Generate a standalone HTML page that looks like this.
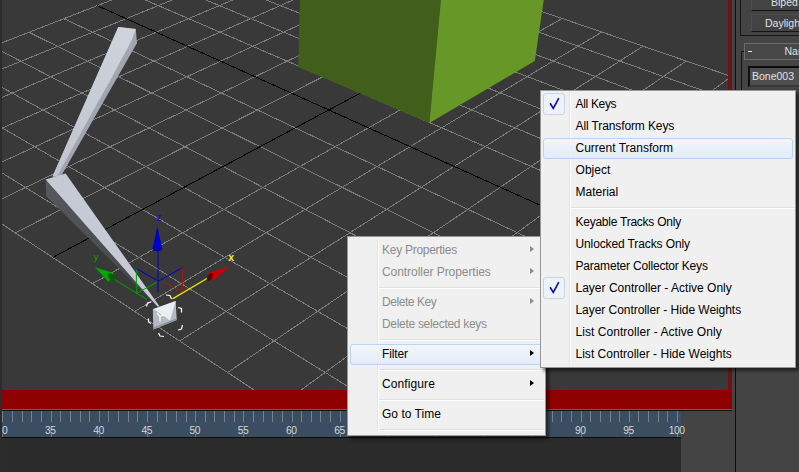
<!DOCTYPE html>
<html><head><meta charset="utf-8"><title>Filter menu</title>
<style>
html,body{margin:0;padding:0}
body{width:799px;height:472px;overflow:hidden;position:relative;background:#444444;font-family:"Liberation Sans",sans-serif}
.abs{position:absolute}
.vp{position:absolute;left:2px;top:0;background:#393939;overflow:hidden}
.menu{position:absolute;background:#f0f0f0;border:1px solid #979797;box-sizing:border-box;font-size:12px;color:#000;box-shadow:3px 3px 3px rgba(0,0,0,.5)}
.menu .gut{position:absolute;top:2px;bottom:2px;width:1px;background:#e2e3e3;border-right:1px solid #fff}
.mi{position:absolute;left:0;right:0;height:22px;line-height:22px;white-space:nowrap}
.mi span{position:absolute;top:0}
.dis{color:#8c8c8c}
.sep{position:absolute;height:1px;background:#e0e0e0;border-bottom:1px solid #fff}
.hl{position:absolute;box-sizing:border-box;border:1px solid #b4d2f6;border-radius:3px;background:linear-gradient(#f3f7fc,#e1ecfa);opacity:.9}
.arr{position:absolute;width:0;height:0;border-left:4px solid #000;border-top:3.5px solid transparent;border-bottom:3.5px solid transparent}
.chk{position:absolute;box-sizing:border-box;width:22px;height:22px;border:1px solid #c2d5ec;border-radius:3px;background:#eef3fa}
.ptxt{position:absolute;color:#e1e1e1;font-size:10.5px;white-space:nowrap}
.tl{position:absolute;color:#d4d8dc;font-size:10.3px;letter-spacing:-0.45px;white-space:nowrap;transform:translateX(-50%)}
</style></head><body>
<div class="abs" style="left:0;top:0;width:2px;height:472px;background:#2c2c2c"></div>
<svg class="vp" width="727" height="390" viewBox="2 0 727 390">
<defs><linearGradient id="b1g" gradientUnits="userSpaceOnUse" x1="127" y1="28" x2="55" y2="176"><stop offset="0" stop-color="#cfd3db"/><stop offset="1" stop-color="#c0c4ce"/></linearGradient><linearGradient id="b2d" gradientUnits="userSpaceOnUse" x1="46" y1="185" x2="150" y2="300"><stop offset="0" stop-color="#55585e"/><stop offset="1" stop-color="#444649"/></linearGradient></defs>
<g stroke-width="1" fill="none" shape-rendering="crispEdges">
<line x1="-171.20" y1="110.18" x2="297.48" y2="-72.27" stroke="#7c7c7c"/>
<line x1="-171.20" y1="110.18" x2="392.61" y2="481.06" stroke="#7c7c7c"/>
<line x1="-144.00" y1="128.08" x2="326.29" y2="-62.40" stroke="#7c7c7c"/>
<line x1="-127.35" y1="93.11" x2="438.20" y2="442.22" stroke="#7c7c7c"/>
<line x1="-115.41" y1="146.88" x2="356.19" y2="-52.15" stroke="#7c7c7c"/>
<line x1="-85.54" y1="76.84" x2="480.65" y2="406.05" stroke="#7c7c7c"/>
<line x1="-85.32" y1="166.68" x2="387.23" y2="-41.51" stroke="#7c7c7c"/>
<line x1="-45.64" y1="61.30" x2="520.27" y2="372.30" stroke="#7c7c7c"/>
<line x1="-53.60" y1="187.54" x2="419.49" y2="-30.46" stroke="#7c7c7c"/>
<line x1="-7.51" y1="46.46" x2="557.33" y2="340.73" stroke="#7c7c7c"/>
<line x1="-20.12" y1="209.57" x2="453.04" y2="-18.96" stroke="#7c7c7c"/>
<line x1="28.97" y1="32.26" x2="592.08" y2="311.13" stroke="#7c7c7c"/>
<line x1="15.27" y1="232.84" x2="487.95" y2="-6.99" stroke="#7c7c7c"/>
<line x1="63.88" y1="18.67" x2="624.72" y2="283.32" stroke="#7c7c7c"/>
<line x1="92.47" y1="283.63" x2="562.23" y2="18.47" stroke="#7c7c7c"/>
<line x1="129.44" y1="-6.85" x2="684.39" y2="232.48" stroke="#7c7c7c"/>
<line x1="134.69" y1="311.40" x2="601.79" y2="32.03" stroke="#7c7c7c"/>
<line x1="160.25" y1="-18.85" x2="711.75" y2="209.18" stroke="#7c7c7c"/>
<line x1="179.63" y1="340.96" x2="643.11" y2="46.19" stroke="#7c7c7c"/>
<line x1="189.85" y1="-30.37" x2="737.62" y2="187.14" stroke="#7c7c7c"/>
<line x1="227.55" y1="372.49" x2="686.30" y2="60.99" stroke="#7c7c7c"/>
<line x1="218.31" y1="-41.45" x2="762.13" y2="166.26" stroke="#7c7c7c"/>
<line x1="278.78" y1="406.19" x2="731.49" y2="76.48" stroke="#7c7c7c"/>
<line x1="245.70" y1="-52.11" x2="785.38" y2="146.45" stroke="#7c7c7c"/>
<line x1="333.67" y1="442.29" x2="778.84" y2="92.71" stroke="#7c7c7c"/>
<line x1="272.07" y1="-62.38" x2="807.47" y2="127.63" stroke="#7c7c7c"/>
<line x1="392.61" y1="481.06" x2="828.48" y2="109.73" stroke="#7c7c7c"/>
<line x1="297.48" y1="-72.27" x2="828.48" y2="109.73" stroke="#7c7c7c"/>
<line x1="52.74" y1="257.49" x2="524.32" y2="5.47" stroke="#000"/>
<line x1="97.35" y1="5.64" x2="655.43" y2="257.16" stroke="#000"/>
</g>
<!-- green box -->
<polygon points="300,-1 298.2,66.9 429.4,123.1 441,-1" fill="#415f1a"/>
<polygon points="441,-1 429.4,123.1 534.8,61 543.9,-1" fill="#679726"/>
<!-- bone 1 -->
<polygon points="118.3,27 135.8,28.9 137,43 60.8,176.5 52.5,176.5" fill="#a2a6b0"/>
<polygon points="118.3,27 135.8,28.9 131.8,40 127,49.3 121,60 109.9,81.2 97.7,102.4 56.8,176.5 52.5,176.5" fill="url(#b1g)"/>
<!-- bone 2 -->
<polygon points="45.6,179.4 46.3,196.3 157.5,306.5" fill="url(#b2d)"/>
<polygon points="45.6,179.4 65.6,173.5 159.6,306.5 157.4,306.5" fill="#c6cad4"/>
<!-- gizmo -->
<g fill="none" stroke-width="1">
<line x1="112" y1="278" x2="147" y2="299.5" stroke="#00a000"/>
<line x1="136.4" y1="268.6" x2="136.4" y2="293.5" stroke="#00a000"/>
<line x1="136.4" y1="293.5" x2="158.4" y2="281.3" stroke="#00a000"/>
<polyline points="136.4,268.6 158.4,281.1 182.5,267.6" stroke="#0000c8"/>
<line x1="158" y1="250" x2="158" y2="292.5" stroke="#0000c8"/>
<line x1="182.5" y1="267.6" x2="182.5" y2="292.2" stroke="#a01818"/>
<line x1="162" y1="281.3" x2="182.5" y2="292.2" stroke="#a01818"/>
<line x1="172.5" y1="298.8" x2="209.5" y2="277" stroke="#e6e600" stroke-width="1.4"/>
</g>
<!-- cones -->
<polygon points="157.3,226.5 152.6,248.6 162.2,248.6" fill="#0000c8"/>
<ellipse cx="157.4" cy="248.6" rx="4.8" ry="2.6" fill="#0000b8"/>
<polygon points="94.7,267.3 113.5,273 108.8,282" fill="#00a800"/>
<ellipse cx="111.3" cy="277.6" rx="2.6" ry="4.8" transform="rotate(-28 111.3 277.6)" fill="#006000"/>
<polygon points="229.4,266.6 208.2,273 213.4,280.6" fill="#cc0000"/>
<ellipse cx="210" cy="277" rx="2.3" ry="4.5" transform="rotate(32 210 277)" fill="#600000"/>
<text x="156.2" y="220.8" font-family="Liberation Sans, sans-serif" font-size="10" font-weight="bold" fill="#1414b8">z</text>
<text x="228.2" y="260.8" font-family="Liberation Sans, sans-serif" font-size="10.5" font-weight="bold" fill="#f0f030">x</text>
<text x="93.8" y="260.4" font-family="Liberation Sans, sans-serif" font-size="9.5" fill="#00a800">y</text>
<!-- nub -->
<polygon points="152.8,309.2 175.7,300.9 176.7,320 153.4,329.5" fill="#b6bac3"/>
<polygon points="153.5,309 175.7,300.9 170,320.5" fill="#eaedf1"/>
<polygon points="153.4,329.5 176.7,320 176.6,318.3 153.5,327.6" fill="#90949c"/>
<g stroke="#fff" stroke-width="1.2" fill="none">
<polyline points="146.5,306.5 147.5,303 151,302"/>
<polyline points="166,295 170,295.5 171.5,299"/>
<polyline points="178,307.5 181.5,308.5 181.5,312.5"/>
<polyline points="182.5,325 181.5,329 178,330"/>
<polyline points="164,336.5 160,336 158.5,333"/>
<polyline points="151,323.5 148.5,322 148.5,318.5"/>
<polyline points="157,313 160,316.5 164,314.5"/>
<line x1="160" y1="316.5" x2="160" y2="321.5"/>
</g>
</svg>
<!-- red frame + time slider -->
<div class="abs" style="left:728.3px;top:0;width:3.3px;height:410px;background:#681515"></div>
<div class="abs" style="left:2px;top:390px;width:729.6px;height:19px;background:#8f0000"></div>
<div class="abs" style="left:2px;top:409px;width:729.6px;height:1px;background:#885050"></div>
<div class="abs" style="left:2px;top:410px;width:729.6px;height:1px;background:#151515"></div>
<!-- timeline -->
<div class="abs" id="tl" style="left:2px;top:411px;width:679px;height:26px;background:#3b4e61;clip-path:inset(0 -12px 0 0)"><div class="abs" style="left:0px;top:0px;width:1px;height:11px;background:#76828e"></div>
<div class="abs" style="left:0px;top:23px;width:1px;height:3px;background:#76828e"></div>
<div class="tl" style="left:0.11px;top:14.5px;line-height:10px">30</div>
<div class="abs" style="left:10px;top:0px;width:1px;height:11px;background:#76828e"></div>
<div class="abs" style="left:20px;top:0px;width:1px;height:11px;background:#76828e"></div>
<div class="abs" style="left:29px;top:0px;width:1px;height:11px;background:#76828e"></div>
<div class="abs" style="left:39px;top:0px;width:1px;height:11px;background:#76828e"></div>
<div class="abs" style="left:49px;top:0px;width:1px;height:11px;background:#76828e"></div>
<div class="abs" style="left:49px;top:23px;width:1px;height:3px;background:#76828e"></div>
<div class="tl" style="left:48.30px;top:14.5px;line-height:10px">35</div>
<div class="abs" style="left:58px;top:0px;width:1px;height:11px;background:#76828e"></div>
<div class="abs" style="left:68px;top:0px;width:1px;height:11px;background:#76828e"></div>
<div class="abs" style="left:78px;top:0px;width:1px;height:11px;background:#76828e"></div>
<div class="abs" style="left:87px;top:0px;width:1px;height:11px;background:#76828e"></div>
<div class="abs" style="left:97px;top:0px;width:1px;height:11px;background:#76828e"></div>
<div class="abs" style="left:97px;top:23px;width:1px;height:3px;background:#76828e"></div>
<div class="tl" style="left:96.48px;top:14.5px;line-height:10px">40</div>
<div class="abs" style="left:106px;top:0px;width:1px;height:11px;background:#76828e"></div>
<div class="abs" style="left:116px;top:0px;width:1px;height:11px;background:#76828e"></div>
<div class="abs" style="left:126px;top:0px;width:1px;height:11px;background:#76828e"></div>
<div class="abs" style="left:135px;top:0px;width:1px;height:11px;background:#76828e"></div>
<div class="abs" style="left:145px;top:0px;width:1px;height:11px;background:#76828e"></div>
<div class="abs" style="left:145px;top:23px;width:1px;height:3px;background:#76828e"></div>
<div class="tl" style="left:144.67px;top:14.5px;line-height:10px">45</div>
<div class="abs" style="left:155px;top:0px;width:1px;height:11px;background:#76828e"></div>
<div class="abs" style="left:164px;top:0px;width:1px;height:11px;background:#76828e"></div>
<div class="abs" style="left:174px;top:0px;width:1px;height:11px;background:#76828e"></div>
<div class="abs" style="left:184px;top:0px;width:1px;height:11px;background:#76828e"></div>
<div class="abs" style="left:193px;top:0px;width:1px;height:11px;background:#76828e"></div>
<div class="abs" style="left:193px;top:23px;width:1px;height:3px;background:#76828e"></div>
<div class="tl" style="left:192.85px;top:14.5px;line-height:10px">50</div>
<div class="abs" style="left:203px;top:0px;width:1px;height:11px;background:#76828e"></div>
<div class="abs" style="left:212px;top:0px;width:1px;height:11px;background:#76828e"></div>
<div class="abs" style="left:222px;top:0px;width:1px;height:11px;background:#76828e"></div>
<div class="abs" style="left:232px;top:0px;width:1px;height:11px;background:#76828e"></div>
<div class="abs" style="left:241px;top:0px;width:1px;height:11px;background:#76828e"></div>
<div class="abs" style="left:241px;top:23px;width:1px;height:3px;background:#76828e"></div>
<div class="tl" style="left:241.04px;top:14.5px;line-height:10px">55</div>
<div class="abs" style="left:251px;top:0px;width:1px;height:11px;background:#76828e"></div>
<div class="abs" style="left:261px;top:0px;width:1px;height:11px;background:#76828e"></div>
<div class="abs" style="left:270px;top:0px;width:1px;height:11px;background:#76828e"></div>
<div class="abs" style="left:280px;top:0px;width:1px;height:11px;background:#76828e"></div>
<div class="abs" style="left:290px;top:0px;width:1px;height:11px;background:#76828e"></div>
<div class="abs" style="left:290px;top:23px;width:1px;height:3px;background:#76828e"></div>
<div class="tl" style="left:289.23px;top:14.5px;line-height:10px">60</div>
<div class="abs" style="left:299px;top:0px;width:1px;height:11px;background:#76828e"></div>
<div class="abs" style="left:309px;top:0px;width:1px;height:11px;background:#76828e"></div>
<div class="abs" style="left:318px;top:0px;width:1px;height:11px;background:#76828e"></div>
<div class="abs" style="left:328px;top:0px;width:1px;height:11px;background:#76828e"></div>
<div class="abs" style="left:338px;top:0px;width:1px;height:11px;background:#76828e"></div>
<div class="abs" style="left:338px;top:23px;width:1px;height:3px;background:#76828e"></div>
<div class="tl" style="left:337.41px;top:14.5px;line-height:10px">65</div>
<div class="abs" style="left:347px;top:0px;width:1px;height:11px;background:#76828e"></div>
<div class="abs" style="left:357px;top:0px;width:1px;height:11px;background:#76828e"></div>
<div class="abs" style="left:367px;top:0px;width:1px;height:11px;background:#76828e"></div>
<div class="abs" style="left:376px;top:0px;width:1px;height:11px;background:#76828e"></div>
<div class="abs" style="left:386px;top:0px;width:1px;height:11px;background:#76828e"></div>
<div class="abs" style="left:386px;top:23px;width:1px;height:3px;background:#76828e"></div>
<div class="tl" style="left:385.60px;top:14.5px;line-height:10px">70</div>
<div class="abs" style="left:396px;top:0px;width:1px;height:11px;background:#76828e"></div>
<div class="abs" style="left:405px;top:0px;width:1px;height:11px;background:#76828e"></div>
<div class="abs" style="left:415px;top:0px;width:1px;height:11px;background:#76828e"></div>
<div class="abs" style="left:424px;top:0px;width:1px;height:11px;background:#76828e"></div>
<div class="abs" style="left:434px;top:0px;width:1px;height:11px;background:#76828e"></div>
<div class="abs" style="left:434px;top:23px;width:1px;height:3px;background:#76828e"></div>
<div class="tl" style="left:433.78px;top:14.5px;line-height:10px">75</div>
<div class="abs" style="left:444px;top:0px;width:1px;height:11px;background:#76828e"></div>
<div class="abs" style="left:453px;top:0px;width:1px;height:11px;background:#76828e"></div>
<div class="abs" style="left:463px;top:0px;width:1px;height:11px;background:#76828e"></div>
<div class="abs" style="left:473px;top:0px;width:1px;height:11px;background:#76828e"></div>
<div class="abs" style="left:482px;top:0px;width:1px;height:11px;background:#76828e"></div>
<div class="abs" style="left:482px;top:23px;width:1px;height:3px;background:#76828e"></div>
<div class="tl" style="left:481.97px;top:14.5px;line-height:10px">80</div>
<div class="abs" style="left:492px;top:0px;width:1px;height:11px;background:#76828e"></div>
<div class="abs" style="left:502px;top:0px;width:1px;height:11px;background:#76828e"></div>
<div class="abs" style="left:511px;top:0px;width:1px;height:11px;background:#76828e"></div>
<div class="abs" style="left:521px;top:0px;width:1px;height:11px;background:#76828e"></div>
<div class="abs" style="left:530px;top:0px;width:1px;height:11px;background:#76828e"></div>
<div class="abs" style="left:530px;top:23px;width:1px;height:3px;background:#76828e"></div>
<div class="tl" style="left:530.15px;top:14.5px;line-height:10px">85</div>
<div class="abs" style="left:540px;top:0px;width:1px;height:11px;background:#76828e"></div>
<div class="abs" style="left:550px;top:0px;width:1px;height:11px;background:#76828e"></div>
<div class="abs" style="left:559px;top:0px;width:1px;height:11px;background:#76828e"></div>
<div class="abs" style="left:569px;top:0px;width:1px;height:11px;background:#76828e"></div>
<div class="abs" style="left:579px;top:0px;width:1px;height:11px;background:#76828e"></div>
<div class="abs" style="left:579px;top:23px;width:1px;height:3px;background:#76828e"></div>
<div class="tl" style="left:578.34px;top:14.5px;line-height:10px">90</div>
<div class="abs" style="left:588px;top:0px;width:1px;height:11px;background:#76828e"></div>
<div class="abs" style="left:598px;top:0px;width:1px;height:11px;background:#76828e"></div>
<div class="abs" style="left:608px;top:0px;width:1px;height:11px;background:#76828e"></div>
<div class="abs" style="left:617px;top:0px;width:1px;height:11px;background:#76828e"></div>
<div class="abs" style="left:627px;top:0px;width:1px;height:11px;background:#76828e"></div>
<div class="abs" style="left:627px;top:23px;width:1px;height:3px;background:#76828e"></div>
<div class="tl" style="left:626.52px;top:14.5px;line-height:10px">95</div>
<div class="abs" style="left:636px;top:0px;width:1px;height:11px;background:#76828e"></div>
<div class="abs" style="left:646px;top:0px;width:1px;height:11px;background:#76828e"></div>
<div class="abs" style="left:656px;top:0px;width:1px;height:11px;background:#76828e"></div>
<div class="abs" style="left:665px;top:0px;width:1px;height:11px;background:#76828e"></div>
<div class="abs" style="left:675px;top:0px;width:1px;height:11px;background:#76828e"></div>
<div class="abs" style="left:675px;top:23px;width:1px;height:3px;background:#76828e"></div>
<div class="tl" style="left:674.71px;top:14.5px;line-height:10px">100</div></div>
<div class="abs" style="left:2px;top:437px;width:679px;height:1px;background:#0c0c0c"></div>
<div class="abs" style="left:2px;top:438px;width:679px;height:34px;background:#2b2b2b"></div>
<!-- right panel -->
<div class="abs" style="left:735px;top:0;width:1px;height:472px;background:#0e0e0e"></div>

<div class="abs" style="left:740px;top:0;width:59px;height:35px;border-left:1px solid #141414;border-bottom:1px solid #141414;box-sizing:content-box"></div>
<div class="abs" style="left:751px;top:-6px;width:60px;height:15px;background:#434343;border:1px solid #4f4f4f;border-bottom-color:#141414;border-right-color:#141414"></div>
<div class="ptxt" style="left:771px;top:-4px">Biped</div>
<div class="abs" style="left:751px;top:14px;width:60px;height:16px;background:#434343;border:1px solid #4f4f4f;border-bottom-color:#141414;border-right-color:#141414"></div>
<div class="ptxt" style="left:765px;top:17px">Daylight</div>
<div class="abs" style="left:741px;top:51px;width:60px;height:250px;border-left:1px solid #141414;border-top:1px solid #141414"></div>
<div class="abs" style="left:744px;top:43px;width:60px;height:15px;background:#474747;border:1px solid #6c6c6c"></div>
<div class="abs" style="left:748px;top:51px;width:4px;height:1px;background:#e6e6e6"></div>
<div class="ptxt" style="left:784.5px;top:45px">Name</div>
<div class="abs" style="left:748px;top:66px;width:60px;height:16.5px;background:#4f4f4f;border:2px solid #0e0e0e;border-right:0;border-bottom:2px solid #373737"></div>
<div class="ptxt" style="left:752px;top:70px">Bone003</div>

<div class="menu" style="left:347px;top:236px;width:199px;height:200px">
<div class="gut" style="left:29px"></div>
<div class="hl" style="left:2px;top:106.5px;width:193px;height:21px"></div>
<div class="mi dis" style="top:2px"><span style="left:34px;letter-spacing:-0.272px">Key Properties</span></div>
<div class="arr" style="left:182px;top:9.2px;border-left-color:#8c8c8c"></div>
<div class="mi dis" style="top:24px"><span style="left:34px;letter-spacing:-0.059px">Controller Properties</span></div>
<div class="arr" style="left:182px;top:31.2px;border-left-color:#8c8c8c"></div>
<div class="sep" style="left:31px;right:1px;top:50px"></div>
<div class="mi dis" style="top:54px"><span style="left:34px;letter-spacing:-0.44px">Delete Key</span></div>
<div class="arr" style="left:182px;top:61.2px;border-left-color:#8c8c8c"></div>
<div class="mi dis" style="top:76px"><span style="left:34px;letter-spacing:-0.302px">Delete selected keys</span></div>
<div class="sep" style="left:31px;right:1px;top:102px"></div>
<div class="mi " style="top:106px"><span style="left:34px;letter-spacing:-0.129px">Filter</span></div>
<div class="arr" style="left:182px;top:113.2px;border-left-color:#000"></div>
<div class="sep" style="left:31px;right:1px;top:132px"></div>
<div class="mi " style="top:136px"><span style="left:34px;letter-spacing:0.097px">Configure</span></div>
<div class="arr" style="left:182px;top:143.2px;border-left-color:#000"></div>
<div class="sep" style="left:31px;right:1px;top:162px"></div>
<div class="mi " style="top:166px"><span style="left:34px;letter-spacing:0.021px">Go to Time</span></div>
<div class="sep" style="left:31px;right:1px;top:192px"></div>
</div>
<div class="menu" style="left:540px;top:90px;width:256px;height:278px">
<div class="gut" style="left:28px"></div>
<div class="hl" style="left:2px;top:46.5px;width:250px;height:21px"></div><div class="chk" style="left:2px;top:2px"></div><svg class="abs" style="left:6px;top:6px" width="14" height="14" viewBox="0 0 14 14"><path d="M3.1 6.2 L6.3 11.4 L11.8 1.2" fill="none" stroke="#0c12a1" stroke-width="1.65" stroke-linecap="butt" stroke-linejoin="miter"/></svg><div class="chk" style="left:2px;top:186px"></div><svg class="abs" style="left:6px;top:190px" width="14" height="14" viewBox="0 0 14 14"><path d="M3.1 6.2 L6.3 11.4 L11.8 1.2" fill="none" stroke="#0c12a1" stroke-width="1.65" stroke-linecap="butt" stroke-linejoin="miter"/></svg>
<div class="mi " style="top:2px"><span style="left:34.5px;letter-spacing:-0.32px">All Keys</span></div>
<div class="mi " style="top:24px"><span style="left:34.5px;letter-spacing:-0.111px">All Transform Keys</span></div>
<div class="mi " style="top:46px"><span style="left:34.5px;letter-spacing:0.008px">Current Transform</span></div>
<div class="mi " style="top:68px"><span style="left:34.5px;letter-spacing:0.052px">Object</span></div>
<div class="mi " style="top:90px"><span style="left:34.5px;letter-spacing:0.002px">Material</span></div>
<div class="sep" style="left:30px;right:1px;top:116px"></div>
<div class="mi " style="top:120px"><span style="left:34.5px;letter-spacing:-0.245px">Keyable Tracks Only</span></div>
<div class="mi " style="top:142px"><span style="left:34.5px;letter-spacing:-0.116px">Unlocked Tracks Only</span></div>
<div class="mi " style="top:164px"><span style="left:34.5px;letter-spacing:-0.188px">Parameter Collector Keys</span></div>
<div class="mi " style="top:186px"><span style="left:34.5px;letter-spacing:0.008px">Layer Controller - Active Only</span></div>
<div class="mi " style="top:208px"><span style="left:34.5px;letter-spacing:-0.051px">Layer Controller - Hide Weights</span></div>
<div class="mi " style="top:230px"><span style="left:34.5px;letter-spacing:0.051px">List Controller - Active Only</span></div>
<div class="mi " style="top:252px"><span style="left:34.5px;letter-spacing:0.015px">List Controller - Hide Weights</span></div>
</div>
</body></html>
